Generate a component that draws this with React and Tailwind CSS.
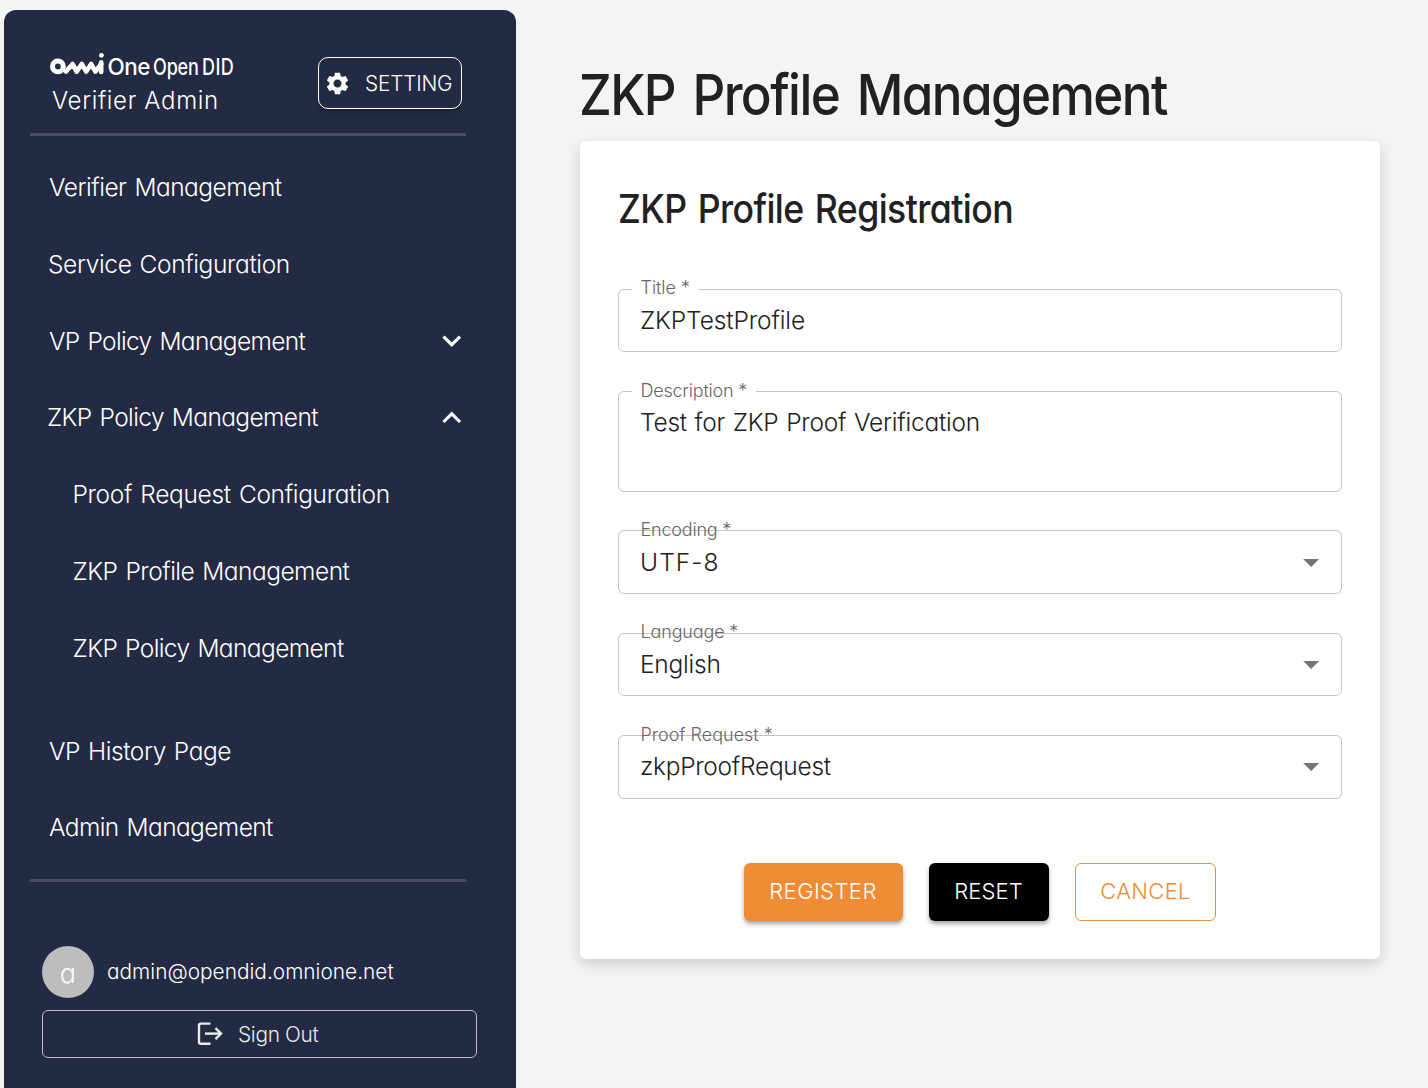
import React from "react";
import { MdSettings, MdExpandMore, MdExpandLess, MdArrowDropDown } from "react-icons/md";

const topItems = [
  { label: "Verifier Management", cls: "ml-[45px] tracking-[-0.5px]" },
  { label: "Service Configuration", cls: "ml-11 tracking-[-0.38px]" },
  { label: "VP Policy Management", cls: "ml-[45px] tracking-[-0.65px]", icon: "down" },
  { label: "ZKP Policy Management", cls: "ml-[43px] tracking-[-0.61px]", icon: "up" },
];

const subItems = [
  { label: "Proof Request Configuration", cls: "ml-[68.5px] tracking-[-0.33px]" },
  { label: "ZKP Profile Management", cls: "ml-[68.5px] tracking-[-0.51px]" },
  { label: "ZKP Policy Management", cls: "ml-[68.5px] tracking-[-0.6px]" },
];

const bottomItems = [
  { label: "VP History Page", cls: "ml-[45px] tracking-[-0.45px]" },
  { label: "Admin Management", cls: "ml-[45px] tracking-[-0.6px]" },
];

function NavItem({ item }) {
  return (
    <a className="flex h-[76.8px] items-center justify-between pr-[45.5px] text-[24.5px] text-white">
      <span className={`whitespace-nowrap [word-spacing:1.6px] ${item.cls}`}>{item.label}</span>
      {item.icon === "down" && <MdExpandMore className="size-[37.5px]" />}
      {item.icon === "up" && <MdExpandLess className="size-[37.5px]" />}
    </a>
  );
}

function Logo() {
  return (
    <div className="flex h-[28px] items-start text-white">
      <svg width="55" height="26" viewBox="49 51 55 26" fill="none" stroke="currentColor">
        <circle cx="57.9" cy="66.4" r="5.4" strokeWidth="5" />
        <path d="M66 71.6 L72.6 64 L76.6 71.6 L81.8 64 L86.2 71.6 L91.2 64 L95.4 71.6 L101 64" strokeWidth="4.6" strokeLinejoin="round" strokeLinecap="round" />
        <path d="M101.2 72 V62.4" strokeWidth="4.6" strokeLinecap="round" />
        <circle cx="101.4" cy="55.3" r="2.4" fill="currentColor" stroke="none" />
      </svg>
      <span className="ml-[3.5px] w-[45.5px] pt-[4px] text-[22.5px] leading-[24px] font-medium tracking-[-0.5px]">One</span>
      <span className="w-[49px] origin-left scale-x-[0.8] pt-[4px] text-[22.5px] leading-[24px] font-[450] tracking-[-0.2px] whitespace-nowrap">Open</span>
      <span className="origin-left scale-x-[0.8] pt-[4px] text-[22.5px] leading-[24px] font-[450] tracking-[0.5px]">DID</span>
    </div>
  );
}

function Field({ label, labelCls, value, valueCls, className, select, multiline }) {
  return (
    <div className={`relative flex rounded-md border border-[#c4c4c4] pl-[21px] ${multiline ? "items-start pt-[15px]" : "items-center"} ${className}`}>
      <label className={`absolute left-[13px] flex h-6 items-center pr-[9px] pl-[8.5px] text-[18px] whitespace-nowrap text-[#666666] ${select ? "" : "bg-white"} ${labelCls}`}>
        {label}
      </label>
      <span className={`text-[24.5px] leading-[30px] whitespace-nowrap text-[#212121] ${valueCls}`}>{value}</span>
      {select && <MdArrowDropDown className="mr-[11px] ml-auto size-[38.4px] text-[#757575]" />}
    </div>
  );
}

export default function App() {
  return (
    <div className="flex h-[1088px] w-[1428px] overflow-hidden bg-[#f4f4f6] pl-1 font-['Inter',sans-serif] font-[350] [font-feature-settings:'cv11']">
      <aside className="mt-[10px] flex w-[512px] shrink-0 flex-col rounded-t-xl bg-[#232a43]">
        <header className="flex h-[107px] items-start justify-between border-b border-[#1f263b] pr-[54px] pl-[45px]">
          <div className="pt-[41px]">
            <Logo />
            <div className="mt-[8px] ml-[3px] text-[24px] leading-[28px] font-light tracking-[0.65px] text-white">
              Verifier Admin
            </div>
          </div>
          <button className="mt-[47px] flex h-[52px] w-[144px] items-center rounded-[10px] border border-white pl-[4.5px] text-[20.8px] font-light tracking-[-0.19px] text-white shadow-[0_3px_3px_rgba(0,0,0,0.25)]">
            <MdSettings className="size-[27px]" />
            <span className="ml-[14.5px] pt-[2px]">SETTING</span>
          </button>
        </header>

        <hr className="mt-4 ml-[26px] h-[3px] w-[436px] border-0 bg-[#474c5f]" />

        <nav className="mt-[13px] h-[730px]">
          {topItems.map((item) => <NavItem key={item.label} item={item} />)}
          {subItems.map((item) => <NavItem key={item.label} item={item} />)}
          <div className="mt-[26px]">
            {bottomItems.map((item) => <NavItem key={item.label} item={item} />)}
          </div>
        </nav>

        <hr className="ml-[26px] h-[3px] w-[436px] border-0 bg-[#474c5f]" />

        <footer className="mt-16 pl-[38px] text-white">
          <div className="flex items-center">
            <div className="flex size-[52px] items-center justify-center rounded-full bg-[#bdbdbd] pt-[4px] text-[27px] font-[350] text-[#fafafa]">a</div>
            <span className="ml-[13px] text-[20.8px] tracking-[0.03px]">admin@opendid.omnione.net</span>
          </div>
          <button className="mt-3 flex h-12 w-[435px] items-center rounded-md border border-[#bcbfc7] pl-[154px] text-[20.8px] font-light text-[#e9ebec]">
            <svg width="26" height="24" viewBox="0 0 26 24" fill="none" stroke="currentColor" strokeWidth="2.4">
              <path d="M13.5 1.6H3.8Q2 1.6 2 3.4V20Q2 21.8 3.8 21.8H13.5" />
              <path d="M8 11.6H24" />
              <path d="M18.5 6.1L24 11.6L18.5 17.1" />
            </svg>
            <span className="ml-[15px] pt-[2px] tracking-[-0.3px]">Sign Out</span>
          </button>
        </footer>
      </aside>

      <main className="ml-16 w-[800px] shrink-0 pt-[55px] text-[#212121]">
        <h1 className="-ml-px origin-left scale-x-90 text-[56.8px] leading-[80px] font-medium tracking-[-1.75px] [word-spacing:6px] whitespace-nowrap">ZKP Profile Management</h1>

        <section className="mt-[6px] h-[818px] rounded-md bg-white px-[38px] pt-[47px] shadow-[0_5px_14px_rgba(0,0,0,0.16)]">
          <h2 className="origin-left scale-x-90 text-[39.6px] leading-[42px] font-medium tracking-[-0.63px] [word-spacing:2.5px] whitespace-nowrap">ZKP Profile Registration</h2>

          <form className="mt-[59px] flex flex-col">
            <Field label="Title *" labelCls="-top-[15px] tracking-[-0.05px]" value="ZKPTestProfile" valueCls="-mt-px tracking-[-0.12px]" className="h-[63px]" />
            <Field multiline label="Description *" labelCls="-top-[14px] tracking-[-0.22px]" value="Test for ZKP Proof Verification" valueCls="tracking-[-0.23px] [word-spacing:1px]" className="mt-[39px] h-[101px]" />
            <Field select label="Encoding *" labelCls="-top-[14px] tracking-[-0.19px]" value="UTF-8" valueCls="tracking-[1.1px]" className="mt-[38px] h-16" />
            <Field select label="Language *" labelCls="-top-[15px] tracking-[-0.15px]" value="English" valueCls="-mt-px tracking-[-0.22px]" className="mt-[39px] h-[63px]" />
            <Field select label="Proof Request *" labelCls="-top-[14px]" value="zkpProofRequest" valueCls="-mt-px tracking-[-0.28px]" className="mt-[39px] h-16 pb-px" />

            <div className="mt-16 flex justify-center gap-[26px] text-[22px] font-light">
              <button type="button" className="h-[58px] w-[159px] rounded-md bg-[#f08c35] pr-[1px] pb-[2px] tracking-[0.43px] text-white shadow-[0_3px_4px_rgba(0,0,0,0.35)]">REGISTER</button>
              <button type="button" className="h-[58px] w-[120px] rounded-md bg-black pr-[1px] pb-[2px] tracking-[0.1px] text-white shadow-[0_3px_4px_rgba(0,0,0,0.35)]">RESET</button>
              <button type="button" className="h-[58px] w-[141px] rounded-md border border-[#f08c35] pb-[2px] tracking-[0.34px] text-[#f08c35]">CANCEL</button>
            </div>
          </form>
        </section>
      </main>
    </div>
  );
}
